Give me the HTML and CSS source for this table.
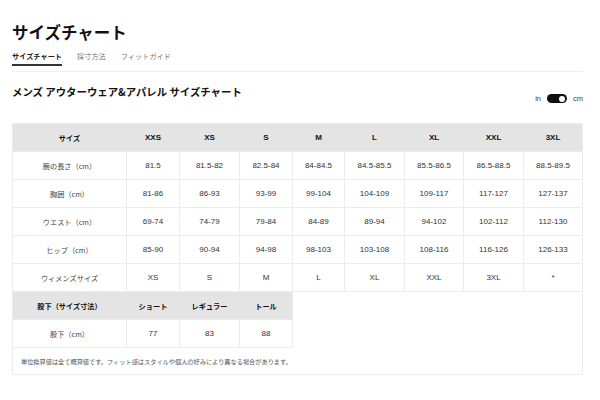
FILE: index.html
```html
<!DOCTYPE html>
<html lang="ja">
<head>
<meta charset="utf-8">
<link rel="stylesheet" href="styles.css">
</head>
<body>
<div class="page">
  <h1 class="title">サイズチャート</h1>
  <nav class="tabs">
    <span class="tab active">サイズチャート</span>
    <span class="tab">採寸方法</span>
    <span class="tab">フィットガイド</span>
  </nav>
  <div class="divider"></div>
  <div class="section-head">
    <h2 class="heading">メンズ アウターウェア&amp;アパレル サイズチャート</h2>
    <div class="unit">
      <span>in</span>
      <span class="switch"><span class="knob"></span></span>
      <span>cm</span>
    </div>
  </div>
  <div class="chart-box">
    <div class="grid main">
      <div class="c h jp">サイズ</div><div class="c h">XXS</div><div class="c h">XS</div><div class="c h">S</div><div class="c h">M</div><div class="c h">L</div><div class="c h">XL</div><div class="c h">XXL</div><div class="c h last">3XL</div>

      <div class="c jp lab">腕の長さ（cm）</div><div class="c">81.5</div><div class="c">81.5-82</div><div class="c">82.5-84</div><div class="c">84-84.5</div><div class="c">84.5-85.5</div><div class="c">85.5-86.5</div><div class="c">86.5-88.5</div><div class="c last">88.5-89.5</div>

      <div class="c jp lab">胸囲（cm）</div><div class="c">81-86</div><div class="c">86-93</div><div class="c">93-99</div><div class="c">99-104</div><div class="c">104-109</div><div class="c">109-117</div><div class="c">117-127</div><div class="c last">127-137</div>

      <div class="c jp lab">ウエスト（cm）</div><div class="c">69-74</div><div class="c">74-79</div><div class="c">79-84</div><div class="c">84-89</div><div class="c">89-94</div><div class="c">94-102</div><div class="c">102-112</div><div class="c last">112-130</div>

      <div class="c jp lab">ヒップ（cm）</div><div class="c">85-90</div><div class="c">90-94</div><div class="c">94-98</div><div class="c">98-103</div><div class="c">103-108</div><div class="c">108-116</div><div class="c">116-126</div><div class="c last">126-133</div>

      <div class="c jp lab">ウィメンズサイズ</div><div class="c">XS</div><div class="c">S</div><div class="c">M</div><div class="c">L</div><div class="c">XL</div><div class="c">XXL</div><div class="c">3XL</div><div class="c last">*</div>
    </div>
    <div class="grid inseam">
      <div class="c h jp">股下（サイズ寸法）</div><div class="c h jp">ショート</div><div class="c h jp">レギュラー</div><div class="c h jp">トール</div>
      <div class="c jp lab">股下（cm）</div><div class="c">77</div><div class="c">83</div><div class="c">88</div>
    </div>
    <p class="note">単位換算値は全て概算値です。フィット感はスタイルや個人の好みにより異なる場合があります。</p>
  </div>
</div>
</body>
</html>
```

FILE: styles.css
```css
* { box-sizing: border-box; }
html, body { margin: 0; padding: 0; background: #fff; }
body {
  font-family: "Liberation Sans", "Noto Sans CJK JP", sans-serif;
  color: #111;
}
.page {
  width: 571px;
  margin-left: 12px;
  padding-top: 22px;
}
.title {
  margin: 0;
  font-family: "Noto Sans CJK JP", sans-serif;
  font-size: 16.5px;
  line-height: 20px;
  font-weight: 700;
  color: #111;
}
.tabs {
  display: flex;
  gap: 15px;
  margin-top: 9px;
}
.tab {
  font-family: "Noto Sans CJK JP", sans-serif;
  font-size: 7.2px;
  line-height: 10px;
  padding-bottom: 3px;
  color: #777;
  border-bottom: 2px solid transparent;
}
.tab.active {
  color: #222;
  font-weight: 700;
  border-bottom-color: #333;
}
.divider {
  height: 1px;
  background: #f0f0f0;
  margin-top: 5px;
}
.section-head {
  display: flex;
  justify-content: space-between;
  align-items: flex-start;
  margin-top: 13px;
  height: 38px;
}
.heading {
  margin: 0;
  font-family: "Noto Sans CJK JP", sans-serif;
  font-size: 10.4px;
  line-height: 14px;
  font-weight: 700;
  color: #111;
}
.unit {
  display: flex;
  align-items: center;
  gap: 6px;
  margin-top: 9px;
  font-size: 7.5px;
  color: #444;
}
.switch {
  display: flex;
  align-items: center;
  justify-content: flex-end;
  width: 20px;
  height: 9px;
  border-radius: 5px;
  background: #111;
  padding-right: 2px;
}
.knob {
  width: 6px;
  height: 6px;
  border-radius: 50%;
  background: #fff;
}
.chart-box {
  border: 1px solid #ececec;
  width: 571px;
}
.grid {
  display: grid;
  grid-auto-rows: 28px;
}
.main {
  grid-template-columns: 114px 53px 60px 53px 52px 60px 59px 60px 58px;
}
.inseam {
  grid-template-columns: 114px 53px 60px 53px;
  width: 280px;
}
.c {
  display: flex;
  align-items: center;
  justify-content: center;
  border-right: 1px solid #ececec;
  border-bottom: 1px solid #ececec;
  font-size: 8px;
  color: #333;
}
.c.last { border-right: none; }
.c.h {
  background: #e4e4e4;
  border-right-color: #e4e4e4;
  font-weight: 700;
  color: #111;
}
.c.jp {
  font-family: "Noto Sans CJK JP", sans-serif;
  font-size: 7.2px;
}
.c.lab { color: #444; }
.inseam .c.h:nth-child(4) { border-right-color: #ececec; }
.note {
  margin: 0;
  height: 26px;
  display: flex;
  align-items: center;
  padding-left: 8px;
  font-family: "Noto Sans CJK JP", sans-serif;
  font-size: 6.2px;
  color: #555;
}
```
